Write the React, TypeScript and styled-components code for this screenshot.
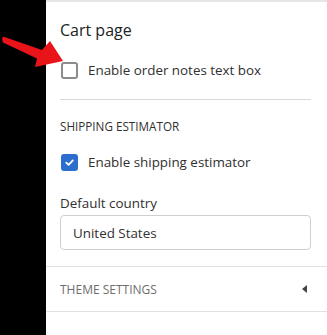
import styled, { createGlobalStyle } from "styled-components";

const GlobalStyle = createGlobalStyle`
  html, body {
    margin: 0;
    padding: 0;
    background: #000;
  }
  * {
    box-sizing: border-box;
  }
`;

const Page = styled.div`
  display: flex;
  min-height: 100vh;
  position: relative;
  font-family: "Open Sans", "Noto Sans", sans-serif;
  color: #303030;
`;

const SideStrip = styled.div`
  width: 46px;
  flex-shrink: 0;
  background: #000;
`;

const Panel = styled.div`
  flex: 1;
  background: #fff;
  border-top: 2px solid #e6e6e6;
`;

const Group = styled.div`
  padding: 0 16px 0 14px;
  border-bottom: 1px solid #e1e1e1;
`;

const Block = styled.div<{ $divider?: boolean }>`
  padding-top: ${(p) => (p.$divider ? "17px" : "18px")};
  padding-bottom: ${(p) => (p.$divider ? "20px" : "16px")};
  border-bottom: ${(p) => (p.$divider ? "1px solid #d9d9d9" : "none")};
`;

const Heading = styled.h2`
  margin: 0 0 21px;
  font-size: 16px;
  line-height: 22px;
  font-weight: 400;
  color: #202223;
`;

const SubHeading = styled.h3`
  margin: 0 0 20px;
  font-size: 11.7px;
  line-height: 16px;
  font-weight: 500;
  color: #303030;
  text-transform: uppercase;
`;

const CheckRow = styled.label`
  display: flex;
  align-items: center;
  gap: 10px;
  padding-left: 1px;
  font-size: 13.4px;
  line-height: 17px;
`;

const Box = styled.span<{ $checked?: boolean }>`
  width: 17px;
  height: 17px;
  border-radius: 3px;
  flex-shrink: 0;
  display: flex;
  align-items: center;
  justify-content: center;
  background: ${(p) => (p.$checked ? "#2c6ecb" : "#fff")};
  border: 2px solid ${(p) => (p.$checked ? "#2c6ecb" : "#8c8c8c")};
`;

const FieldLabel = styled.div`
  margin-top: 22px;
  font-size: 13.4px;
  line-height: 20px;
`;

const Select = styled.div`
  margin-top: 2px;
  height: 35px;
  border: 1px solid #cfcfcf;
  border-radius: 4px;
  padding: 0 12px;
  display: flex;
  align-items: center;
  font-size: 13.4px;
  color: #303030;
`;

const Collapsible = styled.div`
  height: 45px;
  padding: 0 20px 0 14px;
  display: flex;
  align-items: center;
  justify-content: space-between;
  border-bottom: 1px solid #e1e1e1;
  font-size: 12px;
  color: #6d6d6d;
  text-transform: uppercase;
`;

const Caret = styled.span`
  width: 0;
  height: 0;
  border-top: 4px solid transparent;
  border-bottom: 4px solid transparent;
  border-right: 5px solid #444;
`;

const Pointer = styled.svg`
  position: absolute;
  left: 0;
  top: 30px;
`;

function Checkbox({ checked, label }: { checked?: boolean; label: string }) {
  return (
    <CheckRow>
      <Box $checked={checked}>
        {checked && (
          <svg width="11" height="11" viewBox="0 0 12 12">
            <path
              d="M2.5 6.2 L5 8.6 L9.6 3.6"
              fill="none"
              stroke="#fff"
              strokeWidth="1.9"
              strokeLinecap="round"
              strokeLinejoin="round"
            />
          </svg>
        )}
      </Box>
      {label}
    </CheckRow>
  );
}

export default function App() {
  return (
    <>
      <GlobalStyle />
      <Page>
        <SideStrip />
        <Panel>
          <Group>
            <Block $divider>
              <Heading>Cart page</Heading>
              <Checkbox label="Enable order notes text box" />
            </Block>
            <Block>
              <SubHeading>Shipping estimator</SubHeading>
              <Checkbox checked label="Enable shipping estimator" />
              <FieldLabel>Default country</FieldLabel>
              <Select>United States</Select>
            </Block>
          </Group>
          <Collapsible>
            <span>Theme settings</span>
            <Caret />
          </Collapsible>
        </Panel>
        <Pointer width="70" height="42" viewBox="0 30 70 42">
          <polygon
            points="2,39.5 3,36.5 42,50 50,41 63,61 35,67 37,58.5 3,42.5"
            fill="#e8141a"
          />
        </Pointer>
      </Page>
    </>
  );
}
